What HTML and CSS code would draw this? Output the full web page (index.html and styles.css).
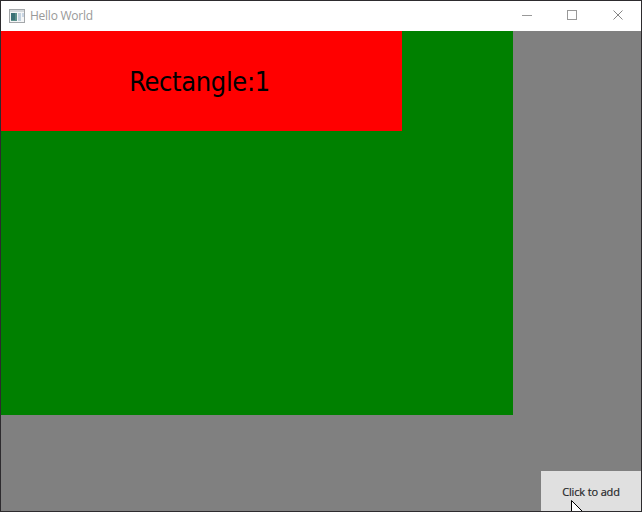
FILE: index.html
```html
<!DOCTYPE html>
<html lang="en">
<head>
<meta charset="utf-8">
<title>Hello World</title>
<link rel="stylesheet" href="styles.css">
</head>
<body>
<div class="window">
  <svg class="edge-marks" width="190" height="1" viewBox="0 0 190 1" aria-hidden="true">
    <path d="M0 .5H190" stroke="#75717b" stroke-dasharray="2 2 1 6 2 14 2 3 1 2 2 2 3 1 2 2 1 3 2 1 3 3 2 2 1 3 3 8 2 2 1 9 2 33 2 6 3 2 2 4 1 4 2 30"/>
  </svg>
  <header class="titlebar">
    <svg class="app-icon" width="16" height="14" viewBox="0 0 16 14" shape-rendering="crispEdges">
      <path fill="#a4a7aa" d="M0 0h16v14H0z"/>
      <path fill="#f5f6f7" d="M1 3h14v10H1z"/>
      <path fill="#d5d9dc" d="M1 1h14v2H1z"/>
      <path fill="#5d918c" d="M2 4h6v8H2z"/>
      <path fill="#3c7277" d="M2 4h4v7H2z"/>
      <path fill="#c4d2df" d="M9 4h3v8H9z"/>
      <path fill="#c9d6e4" d="M13 4h2v4h-2z"/>
    </svg>
    <h1 class="title">Hello World</h1>
    <svg class="controls" width="138" height="30" viewBox="0 0 138 30" fill="none" stroke="#999">
      <path d="M19 14.500h10M64.500 9.500h9v9h-9z" shape-rendering="crispEdges"/>
      <path d="M110.500 9.500l9 9M119.500 9.500l-9 9" stroke="#858585"/>
    </svg>
  </header>
  <main class="content">
    <section class="list">
      <div class="item"><span class="item-label">Rectangle:1</span></div>
    </section>
    <button class="add">Click to add</button>
  </main>
  <svg class="cursor" width="13" height="12" viewBox="0 0 13 12">
    <path d="M.5 14V.5L13 13" fill="#fff" stroke="#000"/>
  </svg>
</div>
</body>
</html>
```
FILE: styles.css
```css
* { box-sizing: border-box; }
body { margin: 0; }
.window {
  position: relative;
  display: flex;
  flex-direction: column;
  width: 642px;
  height: 512px;
  overflow: hidden;
  border: 1px solid #2d2b2e;
}
.edge-marks { position: absolute; top: -1px; left: 128px; }
.titlebar {
  display: flex;
  align-items: center;
  height: 30px;
  flex: none;
  padding-left: 8px;
  background: #fff;
}
.app-icon { flex: none; margin-right: 5px; margin-bottom: 1px; }
.title {
  margin: 0;
  font: 400 12px/16px "Open Sans", sans-serif;
  letter-spacing: -0.25px;
  color: #999;
}
.controls { margin-left: auto; }
.content {
  display: flex;
  flex: 1;
  justify-content: space-between;
  background: #808080;
}
.list { width: 512px; height: 384px; background: #008000; }
.item {
  display: flex;
  align-items: center;
  justify-content: center;
  width: 401px;
  height: 100px;
  padding: 2px 4px 0 0;
  background: #f00;
}
.item-label {
  font: 27px/32px "DejaVu Sans Condensed", "DejaVu Sans", sans-serif;
  font-stretch: condensed;
  letter-spacing: -0.35px;
  color: #000;
}
.add {
  align-self: flex-end;
  width: 100px;
  height: 40px;
  margin-left: -100px;
  padding: 1px 0 0;
  border: 0;
  background: #e0e0e0;
  color: #26282a;
  font: 11px/16px "Open Sans", sans-serif;
  letter-spacing: -0.15px;
  -webkit-text-stroke: 0.2px #26282a;
}
.cursor { position: absolute; left: 570px; top: 499px; }
```
